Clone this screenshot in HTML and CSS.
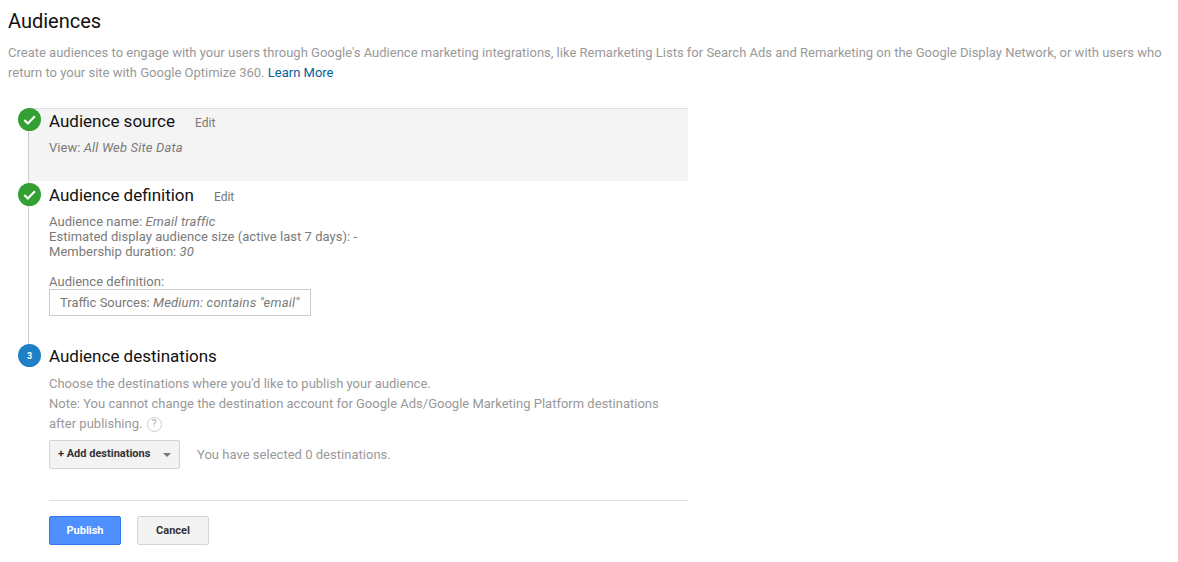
FILE: index.html
```html
<!DOCTYPE html>
<html lang="en">
<head>
<meta charset="utf-8">
<title>Audiences</title>
<link rel="stylesheet" href="styles.css">
</head>
<body>
<header class="intro">
  <h1 class="page-title">Audiences</h1>
  <p class="intro-text">Create audiences to engage with your users through Google's Audience marketing integrations, like Remarketing Lists for Search Ads and Remarketing on the Google Display Network, or with users who return to your site with Google Optimize 360. <a class="link" href="#">Learn More</a></p>
</header>
<main class="steps">
  <section class="step step-source">
    <span class="badge badge-done"><svg viewBox="0 0 24 24" width="24" height="24"><path d="M6.6 12.4l3.7 3.7 7.3-7.5" fill="none" stroke="#fff" stroke-width="2.2"/></svg></span>
    <div class="step-head"><h2 class="step-title">Audience source</h2><a class="edit" href="#">Edit</a></div>
    <p class="detail detail-view">View: <em>All Web Site Data</em></p>
  </section>
  <section class="step step-definition">
    <span class="badge badge-done"><svg viewBox="0 0 24 24" width="24" height="24"><path d="M6.6 12.4l3.7 3.7 7.3-7.5" fill="none" stroke="#fff" stroke-width="2.2"/></svg></span>
    <div class="step-head"><h2 class="step-title">Audience definition</h2><a class="edit" href="#">Edit</a></div>
    <div class="detail detail-list">
      <div>Audience name: <em>Email traffic</em></div>
      <div>Estimated display audience size (active last 7 days): -</div>
      <div>Membership duration: <em>30</em></div>
    </div>
    <div class="detail definition-label">Audience definition:</div>
    <div class="definition-box">Traffic Sources: <em>Medium: contains "email"</em></div>
  </section>
  <section class="step step-destinations">
    <span class="badge badge-current">3</span>
    <div class="step-head"><h2 class="step-title">Audience destinations</h2></div>
    <p class="muted">Choose the destinations where you'd like to publish your audience.<br>Note: You cannot change the destination account for Google Ads/Google Marketing Platform destinations after publishing. <span class="help">?</span></p>
    <div class="add-row">
      <button class="btn btn-add" type="button">+ Add destinations<span class="caret"></span></button>
      <span class="selected">You have selected 0 destinations.</span>
    </div>
    <div class="actions">
      <button class="btn btn-primary" type="button">Publish</button>
      <button class="btn btn-cancel" type="button">Cancel</button>
    </div>
  </section>
</main>
</body>
</html>
```
FILE: styles.css
```css
* { box-sizing: border-box; }
html, body { margin: 0; padding: 0; }
body {
  background: #fff;
  font-family: Roboto, "Liberation Sans", sans-serif;
  font-size: 13px;
  color: #7a7a7a;
}
.intro { padding: 9px 8px 0; }
.page-title {
  margin: 0;
  font-size: 20px;
  line-height: 24px;
  font-weight: 400;
  color: #111;
}
.intro-text {
  margin: 10px 0 0;
  line-height: 20px;
  color: #999;
}
.link { color: #05619c; text-decoration: none; }
.steps { margin: 25px 0 0 28px; width: 660px; }
.step {
  position: relative;
  padding-left: 20px;
  border-left: 1px solid #ccc;
}
.step-source {
  height: 73px;
  background: #f4f4f4;
  border-top: 1px solid #e0e0e0;
}
.step-definition { height: 163px; padding-top: 2px; }
.step-destinations { border-left: 0; padding-left: 21px; }
.badge {
  position: absolute;
  left: -11px;
  top: -1px;
  width: 23px;
  height: 23px;
  border-radius: 50%;
  display: flex;
  align-items: center;
  justify-content: center;
}
.step-definition .badge { top: 2px; }
.step-destinations .badge { top: 0; left: -10px; }
.badge svg { width: 23px; height: 23px; }
.badge-done { background: #34a033; }
.badge-current {
  background: #1e7fc4;
  color: #fff;
  font-size: 9px;
  font-weight: 700;
}
.step-head { display: flex; align-items: baseline; height: 25px; }
.step-title {
  margin: 0;
  font-size: 17px;
  line-height: 24px;
  font-weight: 400;
  color: #111;
}
.edit { margin-left: 20px; font-size: 12px; color: #777; text-decoration: none; }
.detail { line-height: 15px; letter-spacing: .03px; }
.detail em, .definition-box em { font-style: italic; letter-spacing: .18px; }
.detail-view { margin: 6px 0 0; }
.detail-list { margin-top: 6px; }
.definition-label { margin-top: 15px; }
.definition-box {
  width: 262px;
  height: 27px;
  border: 1px solid #ccc;
  padding-left: 10px;
  line-height: 25px;
}
.muted {
  margin: 5px 0 0;
  line-height: 20px;
  color: #999;
  width: 639px;
}
.help {
  display: inline-flex;
  width: 15px;
  height: 15px;
  margin-left: 1px;
  border: 1px solid #ccc;
  border-radius: 50%;
  align-items: center;
  justify-content: center;
  font-size: 10px;
  color: #aaa;
  vertical-align: 1px;
}
.add-row { display: flex; align-items: center; margin-top: 6px; }
.btn {
  font-family: inherit;
  font-size: 11px;
  font-weight: 700;
  border-radius: 2px;
  border: 1px solid #d4d4d4;
  background: #f3f3f3;
  color: #333;
  padding: 0;
}
.btn-add {
  display: flex;
  align-items: center;
  width: 131px;
  height: 29px;
  padding: 0 0 2px 8px;
}
.caret {
  margin: 3px 0 0 13px;
  width: 0;
  height: 0;
  border-left: 4px solid transparent;
  border-right: 4px solid transparent;
  border-top: 4px solid #777;
}
.selected { margin-left: 17px; color: #999; letter-spacing: .02px; }
.actions {
  display: flex;
  gap: 16px;
  margin-top: 31px;
  padding-top: 15px;
  border-top: 1px solid #e0e0e0;
}
.btn-primary {
  width: 72px;
  height: 29px;
  background: #4d90fe;
  border-color: #3079ed;
  color: #fff;
}
.btn-cancel { width: 72px; height: 29px; }
```
